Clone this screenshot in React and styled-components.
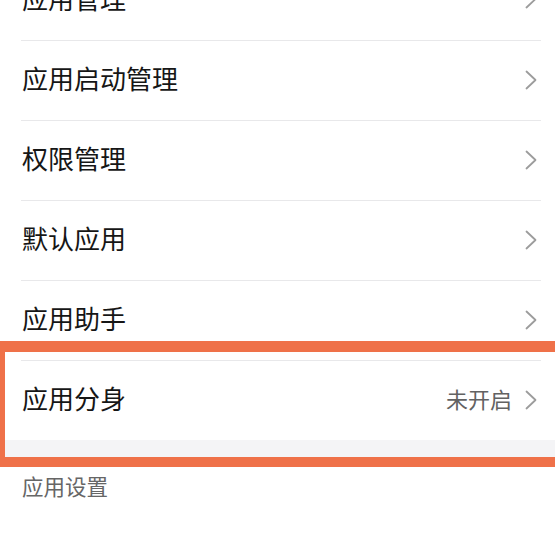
import React from "react";
import styled, { createGlobalStyle } from "styled-components";

const GlobalStyle = createGlobalStyle`
  html, body {
    margin: 0;
    padding: 0;
    background: #ffffff;
  }
  body {
    font-family: "Noto Sans CJK SC", "Noto Sans", sans-serif;
  }
`;

const Page = styled.div`
  position: relative;
  width: 555px;
  height: 543px;
  overflow: hidden;
  background: #ffffff;
`;

/* list is scrolled so the first row is half hidden */
const List = styled.div`
  display: flex;
  flex-direction: column;
  margin-top: -40px;
`;

const Row = styled.div`
  display: flex;
  align-items: center;
  justify-content: space-between;
  height: 80px;
  box-sizing: border-box;
  margin: 0 14px 0 21px;
  padding: 0 4px 0 1px;
  border-top: ${props => (props.first ? "none" : "1px solid #e8e8ea")};
`;

const Label = styled.span`
  font-size: 26px;
  line-height: 1;
  padding-bottom: 5px;
  color: #161616;
`;

const Right = styled.span`
  display: flex;
  align-items: center;
  gap: 13px;
  padding-bottom: 2px;
`;

const Value = styled.span`
  font-size: 22px;
  line-height: 1;
  padding-bottom: 3px;
  color: #626262;
`;

const SectionGap = styled.div`
  height: 27px;
  background: #f4f4f6;
`;

const SectionHeader = styled.div`
  padding: 6px 22px 0;
  font-size: 21.5px;
  line-height: 26px;
  color: #666666;
`;

const Highlight = styled.div`
  position: absolute;
  top: 341px;
  left: 0;
  right: -12px;
  height: 126px;
  box-sizing: border-box;
  border: 11px solid #ef7149;
  border-left-width: 5px;
  border-bottom-width: 10px;
  pointer-events: none;
`;

const Chevron = () => (
  <svg width="12" height="20" viewBox="0 0 12 20" fill="none">
    <polyline
      points="1.5,1.5 10.5,10 1.5,18.5"
      stroke="#9c9c9c"
      strokeWidth="1.8"
      strokeLinecap="round"
      strokeLinejoin="round"
    />
  </svg>
);

const items = [
  { label: "应用管理" },
  { label: "应用启动管理" },
  { label: "权限管理" },
  { label: "默认应用" },
  { label: "应用助手" },
  { label: "应用分身", value: "未开启" },
];

const App = () => {
  return (
    <>
      <GlobalStyle />
      <Page>
        <List>
          {items.map((item, i) => (
            <Row key={item.label} first={i === 0}>
              <Label>{item.label}</Label>
              <Right>
                {item.value ? <Value>{item.value}</Value> : null}
                <Chevron />
              </Right>
            </Row>
          ))}
        </List>
        <SectionGap />
        <SectionHeader>应用设置</SectionHeader>
        <Highlight />
      </Page>
    </>
  );
};

export default App;
